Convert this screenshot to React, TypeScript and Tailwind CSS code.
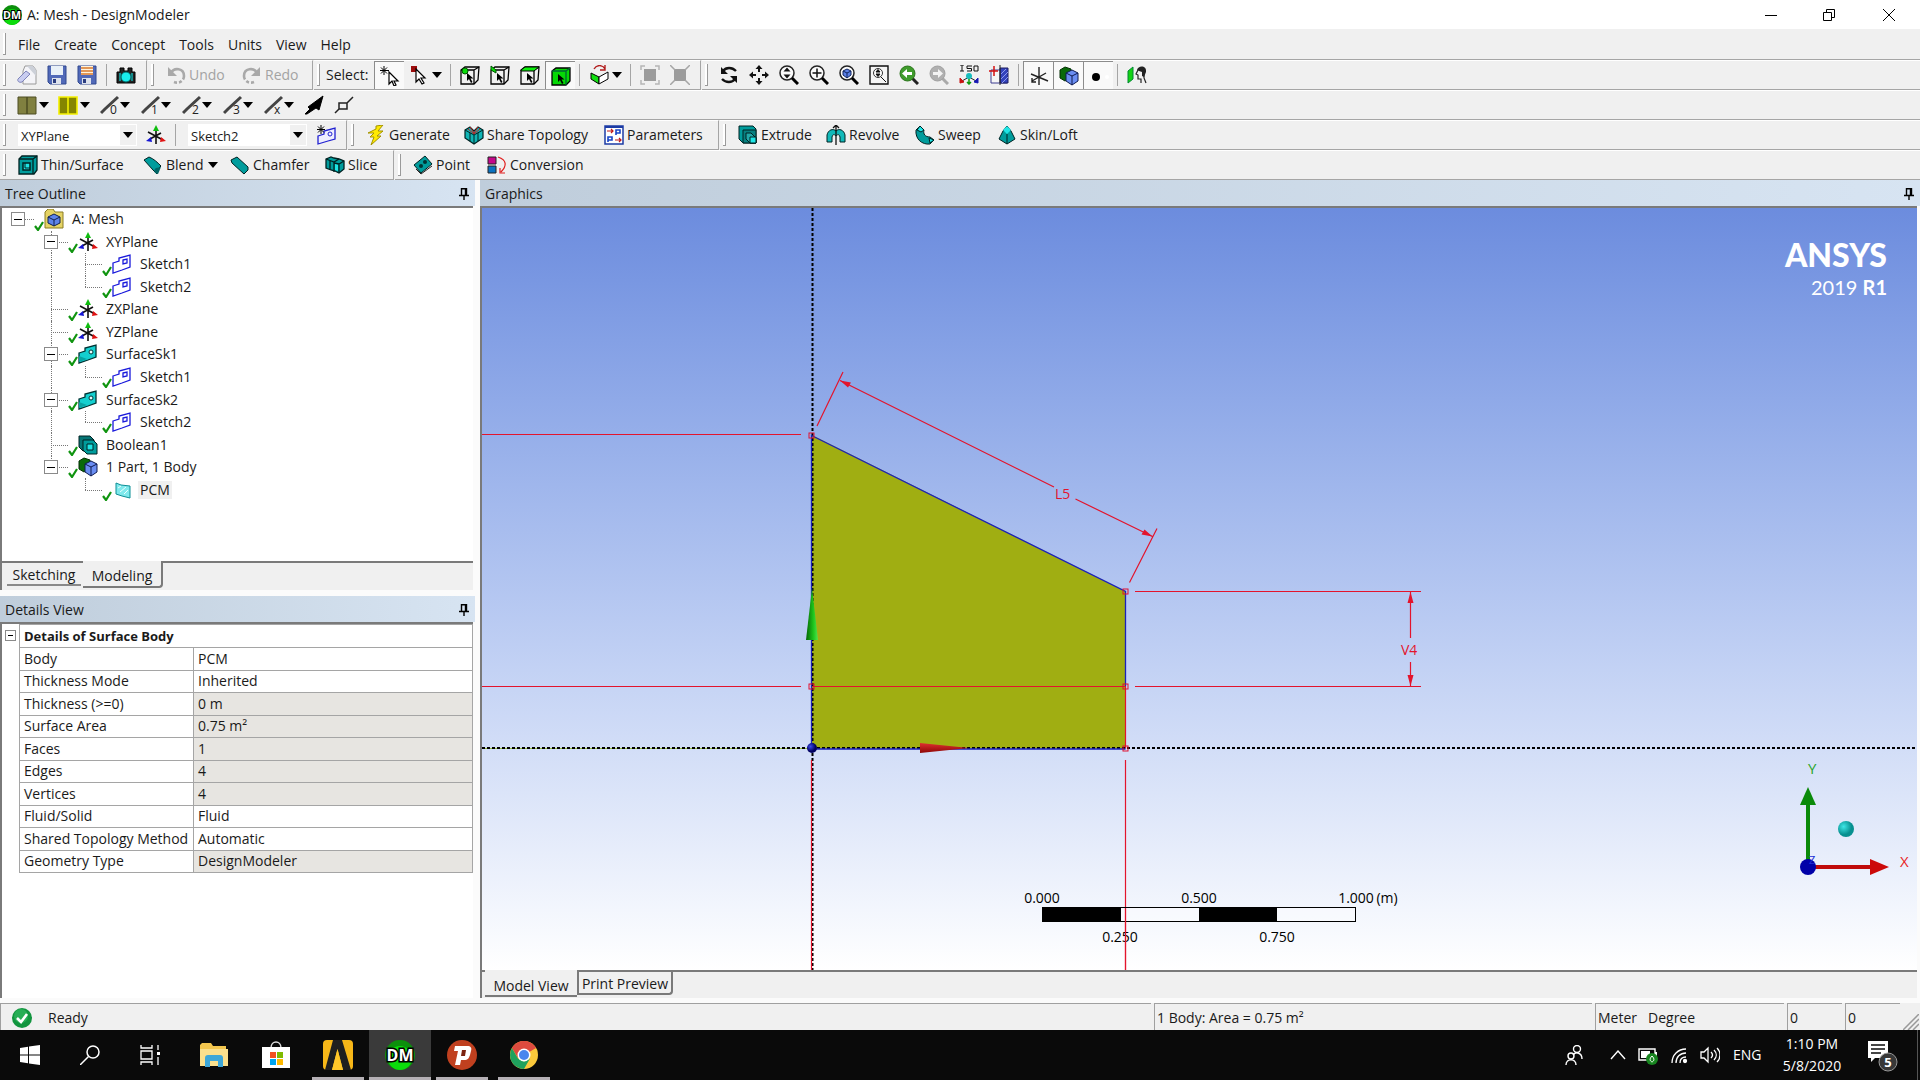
import React from 'react'

type IconName = keyof typeof icons

const teal = '#009c9c'
const cyan = '#1fe5e5'

const cursor = (
  <path d="M9 6v12l3-3 2 5 2-1-2-4h4z" fill="#fff" stroke="#000" strokeWidth="1.2" />
)

const cubeOutline = (
  <>
    <path d="M1 5l4-3h14l-1 13-4 4H1z" fill="#f0f0f0" stroke="#000" strokeWidth="1.3" />
    <path d="M1 5h13v14M14 5l5-3" fill="none" stroke="#000" strokeWidth="1.3" />
  </>
)

const smallCursor = <path d="M7 8v8l2-2 2 4 1.5-1-2-3.500h3z" fill="#000" />

const lens = (
  <>
    <circle cx="8" cy="8" r="7" fill="#fafafa" stroke="#222" strokeWidth="1.5" />
    <path d="M13 13l6 6" stroke="#000" strokeWidth="3" />
  </>
)

const icons = {
  newFile: (
    <>
      <path d="M8 1h8l3 4v14H6V6z" fill="#f4f4f8" stroke="#999" />
      <path d="M10 1l9 10V5l-3-4z" fill="#ccd0d8" />
      <path d="M1 14l8-8 4 3-8 8c-3 1-5-1-4-3z" fill="#c9cdf0" stroke="#7d82b8" />
    </>
  ),
  save: (
    <>
      <path d="M1 1h18v18H3l-2-2z" fill="#5169b8" stroke="#30488f" />
      <path d="M4 1h12v9H4z" fill="#e9f0f7" />
      <path d="M5 13h9v6H5z" fill="#dde2ec" />
      <path d="M6 14h3v4H6z" fill="#2b3c80" />
    </>
  ),
  saveAs: (
    <>
      <path d="M1 1h18v18H3l-2-2z" fill="#5169b8" stroke="#30488f" />
      <path d="M4 1h12v9H4z" fill="#fff3dd" />
      <path d="M4 3h12M4 6h12M4 9h12" stroke="#d8792c" strokeWidth="1.300" />
      <path d="M5 13h9v6H5z" fill="#dde2ec" />
      <path d="M6 14h3v4H6z" fill="#2b3c80" />
    </>
  ),
  camera: (
    <>
      <path d="M1 7h3V3h4v3h4V3h4v4h3v11H1z" fill="#222" stroke="#000" />
      <path d="M3 8h2v8H3zM15 8h2v8h-2z" fill="#178c8c" />
      <circle cx="10" cy="12" r="5" fill="#19eded" stroke="#066" />
    </>
  ),
  undo: (
    <>
      <path d="M5 8c3-6 13-5 13 3 0 5-5 8-10 6" fill="none" stroke="#a9a9a9" strokeWidth="2.600" strokeDasharray="22 2 3 2" />
      <path d="M2 2v9h9z" fill="#a9a9a9" />
    </>
  ),
  redo: (
    <>
      <path d="M15 8C12 2 2 3 2 11c0 5 5 8 10 6" fill="none" stroke="#a9a9a9" strokeWidth="2.600" strokeDasharray="22 2 3 2" />
      <path d="M18 2v9H9z" fill="#a9a9a9" />
    </>
  ),
  newSelect: (
    <>
      <path d="M4 0v9M0 4.500h9M1 1.500l6 6M7 1.500l-6 6" stroke="#000" />
      {cursor}
    </>
  ),
  boxSelect: (
    <>
      <path d="M1 1h6v6H1z" fill="#9b0c0c" />
      <path d="M6 4v13l3-3 3 5 2-1-3-5h4z" fill="#fff" stroke="#000" strokeWidth="1.200" />
    </>
  ),
  selPoint: (
    <>
      {cubeOutline}
      <circle cx="5" cy="6" r="3" fill="#0bdc0b" stroke="#050" />
      {smallCursor}
    </>
  ),
  selEdge: (
    <>
      {cubeOutline}
      <path d="M1 1l5 4v3L1 5z" fill="#0bdc0b" stroke="#050" />
      {smallCursor}
    </>
  ),
  selFace: (
    <>
      {cubeOutline}
      <path d="M1 5l4-3h14l-5 4H1z" fill="#0bee0b" stroke="#000" />
      {smallCursor}
    </>
  ),
  selBody: (
    <>
      <path d="M1 5l4-3h14v13l-4 4H1z" fill="#05d805" stroke="#000" strokeWidth="1.300" />
      <path d="M1 5h14v14M15 5l4-3" fill="none" stroke="#063" strokeWidth="1.300" />
      {smallCursor}
    </>
  ),
  extend: (
    <>
      <path d="M1 8l8 4v7l-8-5z" fill="#12e012" stroke="#000" />
      <path d="M9 12l9-5v7l-9 5z" fill="#fff" stroke="#000" />
      <path d="M4 4c3-5 9-4 11 0M15 0v5h-5" fill="none" stroke="#b21c1c" strokeWidth="1.400" />
    </>
  ),
  expand: (
    <>
      <path d="M4 4h12v12H4z" fill="#9c9c9c" />
      <path d="M1 5V1h4M15 1h4v4M19 15v4h-4M5 19H1v-4" fill="none" stroke="#b5b5b5" strokeWidth="1.500" />
    </>
  ),
  shrink: (
    <>
      <path d="M4 4h12v12H4z" fill="#9c9c9c" />
      <path d="M0 0l5 5M20 0l-5 5M0 20l5-5M20 20l-5-5" stroke="#a5a5a5" strokeWidth="1.500" />
    </>
  ),
  rotate: (
    <>
      <path d="M4 6c3-4 9-4 13 0M16 14c-3 4-9 4-13 0" fill="none" stroke="#111" strokeWidth="2.400" />
      <path d="M2 2v7h7zM18 18v-7h-7z" fill="#111" />
    </>
  ),
  pan: (
    <path d="M10 0l3.500 4h-2.500v3H9V4H6.500zM10 20l3.500-4h-2.500v-3H9v3H6.500zM0 10l4-3.500V9h3v2H4v2.500zM20 10l-4-3.500V9h-3v2h3v2.500z" fill="#111" />
  ),
  zoom: (
    <>
      {lens}
      <path d="M8 2.500l3.500 4h-7zM8 13.500l3.500-4h-7z" fill="#111" />
    </>
  ),
  zoomBox: (
    <>
      {lens}
      <path d="M8 3.500v9M3.500 8h9" stroke="#111" strokeWidth="1.500" />
    </>
  ),
  zoomFit: (
    <>
      {lens}
      <path d="M4 6l4-2 4 2v4l-4 3-4-3z" fill="#5b80e8" stroke="#10255f" />
      <path d="M4 6l4 2 4-2M8 8v5" fill="none" stroke="#10255f" />
    </>
  ),
  magnifier: (
    <>
      <path d="M1 1h18v18H1z" fill="#f6f6f6" stroke="#111" strokeWidth="1.400" />
      <circle cx="9" cy="8" r="4.500" fill="#fff" stroke="#333" />
      <path d="M9 4.500l2 2.500H7zM9 11.500L11 9H7zM12 12l5 5" fill="#111" stroke="#111" />
    </>
  ),
  prevView: (
    <>
      <path d="M13 13l6 6" stroke="#222" strokeWidth="3" />
      <circle cx="8.500" cy="8.500" r="7.500" fill="#3f9c2c" stroke="#2b741c" />
      <path d="M3 8.500l5-4.500v3h5v3H8v3z" fill="#fff" />
    </>
  ),
  nextView: (
    <>
      <path d="M13 13l6 6" stroke="#aaa" strokeWidth="3" />
      <circle cx="8.500" cy="8.500" r="7.500" fill="#b0b0b0" stroke="#a0a0a0" />
      <path d="M14 8.500L9 4v3H4v3h5v3z" fill="#f3f3f3" />
    </>
  ),
  iso: (
    <>
      <path d="M1 0h4M3 0v6M1 6h4M13 1H8v2.500h4.500V6H8M15 1h4v5h-4z" fill="none" stroke="#111" />
      <path d="M10 11v8M8 17l2 2 2-2" fill="none" stroke="#0a980a" strokeWidth="1.500" />
      <path d="M10 12l-7 4" stroke="#222" />
      <path d="M1 18v-5l4 4z" fill="#c81212" stroke="#c81212" />
      <path d="M10 12l7 4" stroke="#222" />
      <path d="M19 18v-5l-4 4z" fill="#1818b4" stroke="#1818b4" />
      <circle cx="10" cy="11" r="3" fill="#17bdbd" />
    </>
  ),
  lookAt: (
    <>
      <path d="M2 5h16v13H2z" fill="#f6f6f6" stroke="#3d3d90" />
      <path d="M11 3h8v15h-8z" fill="#3342bc" stroke="#1f1f60" />
      <path d="M12 9l5-5M12 14l7-7M13 18l6-6" stroke="#8d9bee" />
      <path d="M5 1v10M0 6h9" stroke="#d41111" strokeWidth="1.500" />
      <path d="M11 0v20" stroke="#222" />
    </>
  ),
  axes: <path d="M10 1v18M2 8l17 7M17 7L3 15M3 12v4h4" fill="none" stroke="#222" strokeWidth="1.400" />,
  bodies: (
    <>
      <path d="M1 4l5-3 6 2v9l-6 3-5-3z" fill="#0a6a0a" stroke="#032f03" />
      <path d="M7 7l6-3 6 3v8l-6 4-6-4z" fill="#6a8df2" stroke="#0e1b50" />
      <path d="M7 7l6 3 6-3M13 10v9" fill="none" stroke="#0e1b50" />
    </>
  ),
  point: (
    <>
      <circle cx="7" cy="11" r="4" fill="#000" />
      <circle cx="18" cy="11" r="2" fill="#fff" />
    </>
  ),
  face: (
    <>
      <path d="M1 6l5-4v12l-5 4z" fill="#14d314" stroke="#083" />
      <path d="M11 5l-2 4 2 1v4h3v4M17 9v4l2 5" fill="none" stroke="#222" strokeWidth="1.200" />
      <path d="M10 5c1-5 10-5 9 2l-2 5-2-1V7l-3-1z" fill="#222" />
    </>
  ),
  faceColor: (
    <>
      <path d="M1 2h18v17H1z" fill="#808040" stroke="#4c4c22" />
      <path d="M10 2v17" stroke="#4c4c22" strokeWidth="1.500" />
    </>
  ),
  edgeColor: (
    <>
      <path d="M1 2h18v17H1z" fill="#858500" stroke="#f4f000" strokeWidth="1.600" />
      <path d="M10 2v17" stroke="#f4f000" strokeWidth="1.600" />
    </>
  ),
  arrowEdge: <path d="M1 19l5-5-2-2L19 1l-4 14-3-2-9 6z" fill="#000" stroke="#000" />,
  vertexEdge: <path d="M5 8h8v6H5zM1 18l4-4M13 8l6-6" fill="none" stroke="#222" strokeWidth="1.500" />,
  triad: (
    <>
      <path d="M10 4v15M2 7l15 8M15 8L4 14" stroke="#111" strokeWidth="1.600" />
      <path d="M7 6l3-6 3 6z" fill="#0fbd0f" />
      <path d="M20 16l-6 1 1-5z" fill="#e01212" />
      <path d="M0 16l6 1-1-5z" fill="#1515d4" />
    </>
  ),
  newSketch: (
    <>
      <path d="M2 11l6-2V6l11-3v11l-7 2-10 3z" fill="#eef" stroke="#2020d0" strokeWidth="1.300" />
      <circle cx="14" cy="9" r="2" fill="none" stroke="#2020d0" />
      <path d="M5 0v9M1 4.500h8M2 1.500l6 6M8 1.500l-6 6" stroke="#000" />
    </>
  ),
  sketch: (
    <>
      <path d="M1 9l6-2V4l11-3v12l-8 3-9 3z" fill="#fff" stroke="#1a1adb" strokeWidth="1.300" />
      <path d="M11 6l4-1v4l-4 1z" fill="none" stroke="#1a1adb" strokeWidth="1.300" />
    </>
  ),
  surface: (
    <>
      <path d="M1 9l6-2V4l11-3v12l-8 3-9 3z" fill="#14cfcf" stroke="#033" strokeWidth="1.300" />
      <path d="M1 12v6l8-3z" fill="#08a3a3" />
      <circle cx="13" cy="8" r="2" fill="#e5ffff" stroke="#033" />
    </>
  ),
  generate: (
    <path d="M10 1l7-1-5 6h5l-6 5h4L5 20l3-8H4l4-4H2l8-4z" fill="#ffea00" stroke="#a39300" />
  ),
  shareTopology: (
    <>
      <path d="M1 5l5-3 4 4 4-4 5 3v8l-9 6-9-6z" fill="#10b5b5" stroke="#022" strokeWidth="1.200" />
      <path d="M1 5l9 5 9-5M10 10v9M6 8v8M14 8v8" fill="none" stroke="#022" />
      <path d="M6 2l4 6 4-6M4 4l6 5 6-5" fill="none" stroke="#c32020" />
    </>
  ),
  parameters: (
    <>
      <path d="M1 1h18v18H1z" fill="#fff" stroke="#1c3ba5" strokeWidth="1.500" />
      <path d="M1 2h18" stroke="#1c3ba5" strokeWidth="2" />
      <path d="M12 10V5h4v3h-4M4 17v-5h4v3H4" fill="none" stroke="#1744c7" strokeWidth="1.600" />
      <path d="M3 6h6M7 4l2 2-2 2M11 15h6M15 13l2 2-2 2" fill="none" stroke="#c01818" strokeWidth="1.200" />
    </>
  ),
  extrude: (
    <>
      <path d="M1 1h14l3 3v14H5l-4-4z" fill={teal} stroke="#022" />
      <path d="M5 5h13v13H5z" fill="#078080" stroke="#022" />
      <path d="M8 8h5l5 5v5h-6l-4-4z" fill="#22a9a9" stroke="#022" />
      <path d="M12 12h6v6h-6z" fill={cyan} stroke="#022" />
    </>
  ),
  revolve: (
    <>
      <path d="M1 17v-7c1-5 6-7 9-4 3-3 8-1 9 4v7h-5v-5c-1-3-2-3-4-1-2-2-3-2-4 1v5z" fill="#12b9b9" stroke="#022" />
      <path d="M10 0v20M7 3l3-3 3 3" fill="none" stroke="#111" strokeWidth="1.300" />
    </>
  ),
  sweep: (
    <>
      <path d="M1 5l4-4 4 4c-1 4 1 7 6 7l4 3-4 4C7 20 0 14 1 5z" fill={teal} stroke="#022" />
      <path d="M2 5l3-4 4 4-3 2z" fill={cyan} stroke="#022" />
      <path d="M14 13l5 2-4 3z" fill={cyan} stroke="#022" />
    </>
  ),
  skin: (
    <>
      <path d="M10 1l4 5 4 8-8 5-8-5 4-8z" fill={teal} stroke="#022" />
      <path d="M10 1l4 4-4 4-4-4z" fill={cyan} />
      <path d="M10 9v10" stroke="#022" />
    </>
  ),
  thin: (
    <>
      <path d="M1 4l3-3h15v14l-3 4H1z" fill={teal} stroke="#022" strokeWidth="1.300" />
      <path d="M1 4h14v15M15 4l4-3" fill="none" stroke="#022" strokeWidth="1.300" />
      <path d="M5 8h7v7H5z" fill={cyan} stroke="#022" strokeWidth="1.500" />
      <path d="M7 8v5h5" fill="none" stroke="#022" />
    </>
  ),
  blend: (
    <>
      <path d="M1 5l5-3c5 2 8 5 12 9l-3 3-1 5-4-4z" fill={teal} stroke="#022" />
      <path d="M13 13c-2 1-2 3-1 5l3 1 3-7z" fill="#066" />
    </>
  ),
  chamfer: <path d="M1 5l6-3 11 10v3l-4 4L2 8z" fill={teal} stroke="#022" />,
  slice: (
    <>
      <path d="M1 4l5-2 3 1 5 1 5 2v8l-5 4-4-2-4-1-5-2z" fill={teal} stroke="#022" strokeWidth="1.300" />
      <path d="M9 8l5 1 5-3M14 9v9M5 6v9M9 7v10M1 4l8 3 5-3" fill="none" stroke="#022" strokeWidth="1.300" />
      <path d="M10 9l3 1v6l-3-1z" fill={cyan} />
    </>
  ),
  pointTool: (
    <>
      <path d="M1 10L12 1l7 8-11 9z" fill={teal} stroke="#022" />
      <path d="M3 14l5 5 11-8" fill="none" stroke="#222" />
      <circle cx="12" cy="7" r="2" fill="#033" />
      <circle cx="8" cy="11" r="2" fill="#033" />
    </>
  ),
  conversion: (
    <>
      <path d="M1 2h8v7H1z" fill="#c5088b" stroke="#222" />
      <path d="M1 11h8v7H1z" fill="#0a72c0" stroke="#222" />
      <path d="M11 2c9 3 9 9 3 15M13 13v5h5" fill="none" stroke="#e01f1f" strokeWidth="1.200" />
    </>
  ),
  project: (
    <>
      <path d="M1 3l3-3h5l2 3h8v16H1z" fill="#e5d365" stroke="#8b7d22" />
      <path d="M4 8l6-3 6 3v6l-6 3-6-3z" fill="#5d83ea" stroke="#10204f" />
      <path d="M4 8l6 3 6-3M10 11v6" fill="none" stroke="#10204f" />
    </>
  ),
  boolean: (
    <>
      <path d="M1 1h11l4 4v11H5l-4-4z" fill="#067575" stroke="#022" />
      <path d="M5 5h10l4 4v10H9l-4-4z" fill={teal} stroke="#022" />
      <path d="M9 9h6v6H9z" fill={cyan} stroke="#022" />
    </>
  ),
  sheet: (
    <>
      <path d="M4 3l5 2 9 1v12l-8-2-6-2z" fill="#7fe9ec" stroke="#0d8f96" />
      <path d="M6 8l3-2M8 12l6-5M12 14l4-4" stroke="#e9ffff" />
    </>
  ),
}

function Icon({ name }: { name: IconName }) {
  return (
    <svg viewBox="0 0 20 20" className="h-5 w-5 shrink-0" aria-hidden="true">
      {icons[name]}
    </svg>
  )
}

function Caret() {
  return (
    <svg viewBox="0 0 10 6" className="h-[6px] w-[10px] shrink-0" aria-hidden="true">
      <path d="M0 0h10L5 6z" fill="#000" />
    </svg>
  )
}

function Section({ children, last }: { children: React.ReactNode; last?: boolean }) {
  return (
    <div
      className={`flex items-center border-b border-[#a5a5a5] border-t border-t-white pr-[5px] ${
        last ? 'flex-1' : 'border-r mr-px'
      }`}
    >
      <span className="ml-[3px] mr-[6px] h-[22px] w-[3px] border-r border-b border-[#9a9a9a] bg-white" />
      {children}
    </div>
  )
}

function Sep() {
  return <span className="mx-1 h-[22px] w-px bg-[#a5a5a5]" />
}

function IconButton({ name, label, pressed }: { name: IconName; label: string; pressed?: boolean }) {
  return (
    <button
      type="button"
      aria-label={label}
      aria-pressed={pressed}
      className={`flex h-[28px] w-[30px] items-center justify-center ${
        pressed ? 'border-t border-l border-[#8c8c8c] bg-[#f9f9f9]' : ''
      }`}
    >
      <Icon name={name} />
    </button>
  )
}

function DropButton({ name, label }: { name: IconName; label: string }) {
  return (
    <button type="button" aria-label={label} className="flex h-[28px] w-[42px] items-center gap-[2px] pl-[6px]">
      <Icon name={name} />
      <Caret />
    </button>
  )
}

function TextButton({ name, children, width, caret, disabled }: {
  name: IconName
  children: string
  width: string
  caret?: boolean
  disabled?: boolean
}) {
  return (
    <button
      type="button"
      disabled={disabled}
      className={`flex h-[28px] items-center gap-[3px] pl-[6px] whitespace-nowrap ${width} ${
        disabled ? 'text-[#a3a3a3]' : ''
      }`}
    >
      <Icon name={name} />
      {children}
      {caret && <span className="ml-px"><Caret /></span>}
    </button>
  )
}

function EdgeButton({ digit }: { digit: string }) {
  return (
    <button type="button" aria-label={`Edge coloring ${digit}`} className="flex h-[28px] w-[41px] items-center pl-[6px]">
      <svg viewBox="0 0 20 26" className="h-[26px] w-5" aria-hidden="true">
        <path d="M1 21l4-4L18 5" stroke="#444" strokeWidth="3" fill="none" />
        <text x="10" y="22" fontSize="12" fill="#222">{digit}</text>
      </svg>
      <Caret />
    </button>
  )
}

function Picker({ id, label, value }: { id: string; label: string; value: string }) {
  return (
    <div className="relative h-[22px] w-[119px] bg-white">
      <label htmlFor={id} className="sr-only">{label}</label>
      <select id={id} defaultValue={value} className="h-full w-full appearance-none bg-transparent pt-px pl-[3px] text-[13px] outline-none">
        <option>{value}</option>
      </select>
      <span className="pointer-events-none absolute inset-y-px right-px flex w-4 items-center justify-center bg-[#f0f0f0]">
        <Caret />
      </span>
    </div>
  )
}

const menus = ['File', 'Create', 'Concept', 'Tools', 'Units', 'View', 'Help']

function Toolbars() {
  return (
    <div className="bg-[#f0f0f0]">
      <nav className="flex h-[31px] items-center border-b border-[#a5a5a5]">
        <span className="ml-[3px] mr-3 h-[22px] w-[3px] border-r border-b border-[#9a9a9a] bg-white" />
        <div className="flex gap-[14px] pt-[2px]">
          {menus.map((m) => <button key={m} type="button">{m}</button>)}
        </div>
      </nav>

      <div className="flex h-[30px]">
        <Section>
          <IconButton name="newFile" label="New" />
          <IconButton name="save" label="Save" />
          <IconButton name="saveAs" label="Save as" />
          <Sep />
          <IconButton name="camera" label="Image capture" />
        </Section>
        <Section>
          <TextButton name="undo" width="w-[76px]" disabled>Undo</TextButton>
          <TextButton name="redo" width="w-[71px]" disabled>Redo</TextButton>
        </Section>
        <Section>
          <span className="w-[48px]">Select:</span>
          <IconButton name="newSelect" label="New selection" pressed />
          <DropButton name="boxSelect" label="Select mode" />
          <Sep />
          <IconButton name="selPoint" label="Points" />
          <IconButton name="selEdge" label="Edges" />
          <IconButton name="selFace" label="Faces" />
          <IconButton name="selBody" label="Bodies" pressed />
          <Sep />
          <DropButton name="extend" label="Extend selection" />
          <Sep />
          <IconButton name="expand" label="Expand" />
          <IconButton name="shrink" label="Shrink" />
        </Section>
        <Section last>
          <IconButton name="rotate" label="Rotate" />
          <IconButton name="pan" label="Pan" />
          <IconButton name="zoom" label="Zoom" />
          <IconButton name="zoomBox" label="Box zoom" />
          <IconButton name="zoomFit" label="Zoom to fit" />
          <IconButton name="magnifier" label="Magnifier" />
          <IconButton name="prevView" label="Previous view" />
          <IconButton name="nextView" label="Next view" />
          <IconButton name="iso" label="ISO view" />
          <IconButton name="lookAt" label="Look at" />
          <Sep />
          <IconButton name="axes" label="Display plane" pressed />
          <IconButton name="bodies" label="Display model" pressed />
          <IconButton name="point" label="Display points" pressed />
          <Sep />
          <IconButton name="face" label="Look at face" />
        </Section>
      </div>

      <div className="flex h-[30px]">
        <Section last>
          <button type="button" aria-label="Face color" className="flex h-[28px] w-[41px] items-center gap-[2px] pl-[5px]">
            <Icon name="faceColor" />
            <Caret />
          </button>
          <button type="button" aria-label="Edge color" className="flex h-[28px] w-[41px] items-center gap-[2px] pl-[5px]">
            <Icon name="edgeColor" />
            <Caret />
          </button>
          {['0', '1', '2', '3', 'x'].map((d) => <EdgeButton key={d} digit={d} />)}
          <IconButton name="arrowEdge" label="Edge direction" />
          <IconButton name="vertexEdge" label="Display vertices" />
        </Section>
      </div>

      <div className="flex h-[30px]">
        <Section>
          <span className="w-[6px]" />
          <Picker id="plane" label="Plane" value="XYPlane" />
          <span className="w-1" />
          <IconButton name="triad" label="New plane" />
          <Sep />
          <span className="w-2" />
          <Picker id="sketch" label="Sketch" value="Sketch2" />
          <span className="w-1" />
          <IconButton name="newSketch" label="New sketch" />
        </Section>
        <Section>
          <TextButton name="generate" width="w-[98px]">Generate</TextButton>
          <TextButton name="shareTopology" width="w-[140px]">Share Topology</TextButton>
          <TextButton name="parameters" width="w-[115px]">Parameters</TextButton>
        </Section>
        <Section last>
          <TextButton name="extrude" width="w-[88px]">Extrude</TextButton>
          <TextButton name="revolve" width="w-[89px]">Revolve</TextButton>
          <TextButton name="sweep" width="w-[82px]">Sweep</TextButton>
          <TextButton name="skin" width="w-[100px]">Skin/Loft</TextButton>
        </Section>
      </div>

      <div className="flex h-[30px]">
        <Section>
          <TextButton name="thin" width="w-[125px]">Thin/Surface</TextButton>
          <TextButton name="blend" width="w-[87px]" caret>Blend</TextButton>
          <TextButton name="chamfer" width="w-[95px]">Chamfer</TextButton>
          <TextButton name="slice" width="w-[69px]">Slice</TextButton>
        </Section>
        <Section last>
          <TextButton name="pointTool" width="w-[74px]">Point</TextButton>
          <TextButton name="conversion" width="w-[110px]">Conversion</TextButton>
        </Section>
      </div>
    </div>
  )
}

function PanelHeader({ title }: { title: string }) {
  return (
    <div className="flex h-[26px] shrink-0 items-center justify-between bg-linear-to-r from-[#bfcddb] to-[#d7e4f2] pt-[2px] pr-[6px] pl-[5px]">
      <h2>{title}</h2>
      <button type="button" aria-label={`Pin ${title}`}>
        <svg viewBox="0 0 10 12" className="h-3 w-[10px]" aria-hidden="true">
          <path d="M2.500 0v7M2 .7h5.500M6.500 0v7M7.500 0v7M0 7.500h10M5 7v5" stroke="#000" strokeWidth="1.400" fill="none" />
        </svg>
      </button>
    </div>
  )
}

type TreeRow = {
  label: string
  icon: IconName
  depth: number
  open?: boolean
  // vertical guide lines, one entry per indent level below the root
  guides: ('full' | 'half' | 'none')[]
  selected?: boolean
}

const tree: TreeRow[] = [
  { label: 'A: Mesh', icon: 'project', depth: 0, open: true, guides: [] },
  { label: 'XYPlane', icon: 'triad', depth: 1, open: true, guides: ['full'] },
  { label: 'Sketch1', icon: 'sketch', depth: 2, guides: ['full', 'full'] },
  { label: 'Sketch2', icon: 'sketch', depth: 2, guides: ['full', 'half'] },
  { label: 'ZXPlane', icon: 'triad', depth: 1, guides: ['full'] },
  { label: 'YZPlane', icon: 'triad', depth: 1, guides: ['full'] },
  { label: 'SurfaceSk1', icon: 'surface', depth: 1, open: true, guides: ['full'] },
  { label: 'Sketch1', icon: 'sketch', depth: 2, guides: ['full', 'half'] },
  { label: 'SurfaceSk2', icon: 'surface', depth: 1, open: true, guides: ['full'] },
  { label: 'Sketch2', icon: 'sketch', depth: 2, guides: ['full', 'half'] },
  { label: 'Boolean1', icon: 'boolean', depth: 1, guides: ['full'] },
  { label: '1 Part, 1 Body', icon: 'bodies', depth: 1, open: true, guides: ['half'] },
  { label: 'PCM', icon: 'sheet', depth: 2, guides: ['none', 'half'], selected: true },
]

function Minus() {
  return (
    <button type="button" aria-label="Collapse" className="relative flex h-[14px] w-[14px] items-center justify-center border border-[#8a8a8a] bg-white">
      <span className="h-px w-2 bg-black" />
    </button>
  )
}

function TreeItem({ row }: { row: TreeRow }) {
  return (
    <li className="flex items-center">
      {[0, 1, 2].slice(0, row.depth + 1).map((level) => {
        const guide = level === 0 ? 'none' : row.guides[level - 1]
        return (
          <span key={level} className={`relative flex h-full items-center justify-center ${level === 0 ? 'w-[32px]' : 'w-[34px]'}`}>
            {guide === 'full' && <span className="absolute inset-y-0 left-[17px] border-l border-dotted border-[#777]" />}
            {guide === 'half' && <span className="absolute top-0 bottom-1/2 left-[17px] border-l border-dotted border-[#777]" />}
            {level === row.depth && <span className="absolute left-[17px] right-0 top-1/2 border-t border-dotted border-[#777]" />}
            {level === row.depth && row.open && <Minus />}
          </span>
        )
      })}
      <svg viewBox="0 0 10 10" className="h-[10px] w-[10px] self-end" aria-hidden="true">
        <path d="M1 5l3 4 5-8" stroke="#109410" strokeWidth="2.200" fill="none" />
      </svg>
      <Icon name={row.icon} />
      <span className={`ml-[6px] px-[2px] ${row.selected ? 'bg-[#f0f0f0]' : ''}`}>{row.label}</span>
    </li>
  )
}

const details: { name: string; value: React.ReactNode; locked?: boolean }[] = [
  { name: 'Body', value: 'PCM' },
  { name: 'Thickness Mode', value: 'Inherited' },
  { name: 'Thickness (>=0)', value: '0 m', locked: true },
  { name: 'Surface Area', value: '0.75 m²', locked: true },
  { name: 'Faces', value: '1', locked: true },
  { name: 'Edges', value: '4', locked: true },
  { name: 'Vertices', value: '4', locked: true },
  { name: 'Fluid/Solid', value: 'Fluid' },
  { name: 'Shared Topology Method', value: 'Automatic' },
  { name: 'Geometry Type', value: 'DesignModeler', locked: true },
]

function LeftPane() {
  return (
    <aside className="flex w-[475px] shrink-0 flex-col">
      <PanelHeader title="Tree Outline" />
      <div className="mr-[2px] flex h-[384px] shrink-0 flex-col border-t-2 border-l-2 border-[#7a7a7a] bg-[#f0f0f0]">
        <div className="h-[355px] shrink-0 border-b-2 border-[#7a7a7a] bg-white">
          <ul className="grid h-[293px] auto-rows-fr">
            {tree.map((row, i) => <TreeItem key={i} row={row} />)}
          </ul>
        </div>
        <div className="flex items-start pl-[5px]">
          <button type="button" className="h-[23px] w-[74px] border-b-2 border-[#8a8a8a] pt-[2px]">Sketching</button>
          <button type="button" className="-mt-[2px] ml-[2px] h-[27px] w-[80px] rounded-br-sm border-r-2 border-b-2 border-[#7a7a7a] bg-[#f0f0f0] pt-1">Modeling</button>
        </div>
      </div>
      <div className="h-[6px] shrink-0" />
      <PanelHeader title="Details View" />
      <div className="mr-[2px] flex-1 border-t-2 border-l-2 border-[#7a7a7a] bg-white">
        <div className="flex items-start">
          <div className="flex h-[23px] w-[17px] items-center justify-center">
            <button type="button" aria-label="Collapse details" className="flex h-[11px] w-[11px] items-center justify-center border border-[#8a8a8a]">
              <span className="h-px w-[5px] bg-black" />
            </button>
          </div>
          <table className="h-[249px] flex-1 table-fixed border-collapse text-left leading-4">
            <thead>
              <tr>
                <th colSpan={2} className="h-[23px] border border-[#a5a5a5] px-1 text-[13px] font-bold">Details of Surface Body</th>
              </tr>
            </thead>
            <tbody>
              {details.map((d) => (
                <tr key={d.name}>
                  <th className="w-[174px] border border-[#a5a5a5] px-1 font-normal whitespace-nowrap">{d.name}</th>
                  <td className={`border border-[#a5a5a5] px-1 ${d.locked ? 'bg-[#e7e5e1]' : ''}`}>{d.value}</td>
                </tr>
              ))}
            </tbody>
          </table>
        </div>
      </div>
    </aside>
  )
}

function Handle({ x, y }: { x: number; y: number }) {
  return <rect x={x - 2} y={y - 2} width="5" height="5" fill="none" stroke="#e01030" />
}

function Model() {
  return (
    <svg className="absolute inset-0 h-full w-full" fontFamily='"Open Sans", sans-serif'>
      <defs>
        <radialGradient id="blue" cx="35%" cy="35%">
          <stop offset="0" stopColor="#3a4ae8" />
          <stop offset="1" stopColor="#00005f" />
        </radialGradient>
        <linearGradient id="green">
          <stop offset="0" stopColor="#056605" />
          <stop offset=".6" stopColor="#1cc41c" />
          <stop offset="1" stopColor="#4fe44f" />
        </linearGradient>
        <linearGradient id="red" x2="0" y2="1">
          <stop offset="0" stopColor="#e03030" />
          <stop offset="1" stopColor="#8c0606" />
        </linearGradient>
      </defs>

      <path d="M330 227L643.500 383.500V540.500H330z" fill="#a0ae12" />

      <line x1="0" y1="540.500" x2="330" y2="540.500" stroke="#9bc23c" />
      <line x1="0" y1="540" x2="100%" y2="540" stroke="#000" strokeWidth="2" strokeDasharray="3 2" />
      <line x1="330.500" y1="0" x2="330.500" y2="100%" stroke="#000" strokeWidth="2" strokeDasharray="3 2" />

      <path d="M329.500 540.500V227.500L643.500 383.500V478M330 541H643.500" fill="none" stroke="#1b22b8" strokeWidth="1.300" />

      <g stroke="#e3142c" strokeWidth="1.200" fill="none">
        <path d="M0 226.500H319M0 478.500H319M330 478.500H643.500V540.500M653 383.500H939M653 478.500H939" />
        <path d="M928.500 384V430M928.500 454V478" />
        <path d="M335 218L361 164M358 172.500L572 279M593.500 291L670.500 328.500M647.500 374.500L675 320.500" />
        <line x1="329.500" y1="552" x2="329.500" y2="100%" />
        <line x1="643.500" y1="552" x2="643.500" y2="100%" />
      </g>
      <g fill="#e3142c">
        <path d="M928.500 384l3 11h-6zM928.500 478l3-11h-6zM358 172.500l11 2-3 5zM670.500 328.500l-11-2 3-5z" />
        <text x="573" y="291" fontSize="14">L5</text>
        <text x="919" y="447" fontSize="14">V4</text>
      </g>

      <path d="M330 380l6 52h-12z" fill="url(#green)" />
      <path d="M487 540l-49-5v10z" fill="url(#red)" />
      <Handle x={329} y={227} />
      <Handle x={329} y={478} />
      <Handle x={643} y={383} />
      <Handle x={643} y={478} />
      <Handle x={643} y={540} />
      <circle cx="330" cy="540" r="5" fill="url(#blue)" />

      <rect x="560.500" y="699.500" width="313" height="14" fill="#fff" fillOpacity=".4" stroke="#000" />
      <path d="M561 699h78v15h-78zM717 699h78v15h-78z" fill="#000" />
      <g fontSize="14" textAnchor="middle" fill="#000">
        <text x="560" y="695">0.000</text>
        <text x="717" y="695">0.500</text>
        <text x="874" y="695">1.000</text>
        <text x="905" y="695">(m)</text>
        <text x="638" y="734">0.250</text>
        <text x="795" y="734">0.750</text>
      </g>
      <line x1="643.500" y1="700" x2="643.500" y2="100%" stroke="#e3142c" strokeWidth="1.200" />
    </svg>
  )
}

function Triad() {
  return (
    <svg viewBox="0 0 120 125" className="absolute right-px bottom-[90px] h-[125px] w-[120px]" fontFamily='"Open Sans", sans-serif' fontSize="15">
      <defs>
        <radialGradient id="ball" cx="35%" cy="35%">
          <stop offset="0" stopColor="#3fe6e6" />
          <stop offset="1" stopColor="#079090" />
        </radialGradient>
      </defs>
      <text x="12" y="19" fill="#2aa52a">Y</text>
      <text x="104" y="112" fill="#e82424">X</text>
      <path d="M10 50h4v60h-4z" fill="#0a8a0a" />
      <path d="M12 32l8 18H4z" fill="#0a8a0a" />
      <path d="M12 110h62v4H12z" fill="#c00b0b" />
      <path d="M93 112l-19 8v-16z" fill="#cc0a0a" />
      <circle cx="12" cy="112" r="8" fill="#0000a8" />
      <text x="13" y="109" fontSize="11" fill="#2030d8">Z</text>
      <circle cx="50" cy="74" r="8" fill="url(#ball)" />
    </svg>
  )
}

function Graphics() {
  return (
    <section className="flex min-w-0 flex-1 flex-col">
      <PanelHeader title="Graphics" />
      <div className="mr-[3px] flex flex-1 flex-col border-t-2 border-l-2 border-[#7a7a7a] bg-[#f0f0f0]">
        <div className="relative flex-1 overflow-hidden bg-linear-to-b from-[#6c8cde] to-white">
          <Model />
          <Triad />
          <div className="absolute top-[27px] right-[30px] text-right font-['Lato',sans-serif] text-white">
            <div className="text-[32px] leading-10 font-black">ANSYS</div>
            <div className="text-[20px] leading-6">2019 <b className="font-bold">R1</b></div>
          </div>
        </div>
        <div className="flex h-7 items-start border-t-2 border-[#7a7a7a] pl-[3px]">
          <button type="button" className="-mt-[2px] h-[27px] w-[92px] border-b-2 border-[#7a7a7a] bg-[#f0f0f0] pt-[6px]">Model View</button>
          <button type="button" className="h-[23px] w-[96px] rounded-br-sm border-x-2 border-b-2 border-[#7a7a7a] pt-[2px]">Print Preview</button>
        </div>
      </div>
    </section>
  )
}

function StatusBar() {
  const cell = 'flex items-center border-t border-l border-[#a0a0a0] mr-[3px] pl-[2px] pt-px'
  return (
    <footer className="flex h-[27px] shrink-0 bg-[#f0f0f0]">
      <div className={`${cell} flex-1`}>
        <svg viewBox="0 0 20 20" className="ml-[9px] h-5 w-5" aria-hidden="true">
          <circle cx="10" cy="10" r="10" fill="#12953f" />
          <circle cx="9" cy="8" r="7" fill="#27ae55" />
          <path d="M5 10l4 4 6-8" stroke="#fff" strokeWidth="2.600" fill="none" />
        </svg>
        <span className="ml-4">Ready</span>
      </div>
      <div className={`${cell} w-[438px]`}>1 Body: Area = 0.75 m²</div>
      <div className={`${cell} w-[189px] gap-[11px]`}>
        <span>Meter</span>
        <span>Degree</span>
      </div>
      <div className={`${cell} w-[55px]`}>0</div>
      <div className={`${cell} w-[55px]`}>0</div>
      <svg viewBox="0 0 16 16" className="mr-px h-4 w-4 self-end" aria-hidden="true">
        <path d="M0 16L16 0M5 16L16 5M10 16l6-6" stroke="#999" strokeWidth="1.500" />
      </svg>
    </footer>
  )
}

function DmLogo({ className }: { className: string }) {
  return (
    <svg viewBox="0 0 30 30" className={className} aria-hidden="true">
      <circle cx="15" cy="15" r="15" fill="#0c8f0c" />
      <circle cx="15" cy="18" r="12" fill="#0bdc0b" />
      <text x="15" y="21" textAnchor="middle" fontSize="16" fontWeight="bold" fontFamily='"Open Sans", sans-serif' fill="#fff" stroke="#000" strokeWidth="3" paintOrder="stroke">DM</text>
    </svg>
  )
}

function TaskApp({ label, running, active, children }: {
  label: string
  running?: boolean
  active?: boolean
  children: React.ReactNode
}) {
  return (
    <button type="button" aria-label={label} className={`relative flex h-full w-[62px] items-center justify-center ${active ? 'bg-[#3a3a3a]' : ''}`}>
      {children}
      {running && <span className={`absolute bottom-0 h-[3px] bg-[#b5b0b5] ${active ? 'inset-x-0' : 'inset-x-[5px]'}`} />}
    </button>
  )
}

function Taskbar() {
  return (
    <div className="flex h-[50px] shrink-0 items-center bg-[#0a0a0a] text-white">
      <button type="button" aria-label="Start" className="flex w-[60px] justify-center">
        <svg viewBox="0 0 20 20" className="h-5 w-5" fill="#fff">
          <path d="M0 3l8-1.200v7.700H0zM9 1.600L20 0v9.500H9zM0 10.500h8v7.700L0 17zM9 10.500h11V20L9 18.400z" />
        </svg>
      </button>
      <button type="button" aria-label="Search" className="flex w-[60px] justify-center">
        <svg viewBox="0 0 20 20" className="h-5 w-5" fill="none" stroke="#fff" strokeWidth="1.500">
          <circle cx="13" cy="7" r="6" />
          <path d="M8.500 11.500L0 20" />
        </svg>
      </button>
      <button type="button" aria-label="Task view" className="mr-[3px] flex w-[60px] justify-center">
        <svg viewBox="0 0 20 20" className="h-5 w-5" fill="none" stroke="#fff" strokeWidth="1.300">
          <path d="M1 0v3h11V0M1 6h11v8H1zM1 20v-3h11v3M18 0v5M18 12v8" />
          <path d="M17 7h3v3h-3z" fill="#fff" stroke="none" />
        </svg>
      </button>
      <TaskApp label="File Explorer">
        <svg viewBox="0 0 28 24" className="h-6 w-7">
          <path d="M0 2l2-2h9l2 3h13v19H0z" fill="#f3c64e" />
          <path d="M0 6h28v17H0z" fill="#fbe08d" />
          <path d="M5 24V15c0-2 1-3 3-3h12c2 0 3 1 3 3v9h-5v-6h-8v6z" fill="#3ea7d8" />
        </svg>
      </TaskApp>
      <TaskApp label="Microsoft Store">
        <svg viewBox="0 0 30 30" className="h-[30px] w-[30px]">
          <path d="M10 8c0-8 10-8 10 0" fill="none" stroke="#ddd" strokeWidth="1.500" />
          <path d="M1 7h28v21H1z" fill="#fff" />
          <path d="M9 12h6v6H9z" fill="#f25022" />
          <path d="M16 12h6v6h-6z" fill="#7fba00" />
          <path d="M9 19h6v6H9z" fill="#00a4ef" />
          <path d="M16 19h6v6h-6z" fill="#ffb900" />
        </svg>
      </TaskApp>
      <TaskApp label="Workbench" running>
        <svg viewBox="0 0 30 30" className="h-[30px] w-[30px]">
          <rect width="30" height="30" rx="4" fill="#f7b718" />
          <path d="M10 0h9l9 30h-8L14.500 9 9 30H2z" fill="#1f1f1f" />
          <path d="M14.500 9L20 30H9z" fill="#ffc629" />
        </svg>
      </TaskApp>
      <TaskApp label="DesignModeler" running active>
        <DmLogo className="h-[30px] w-[30px]" />
      </TaskApp>
      <TaskApp label="PowerPoint viewer" running>
        <svg viewBox="0 0 30 30" className="h-[30px] w-[30px]">
          <circle cx="15" cy="15" r="15" fill="#c0401f" />
          <path d="M8 6h12c4 0 5 2 4 5l-1 4c-1 3-2 5-6 5h-3l-1 5H8l3-14H7z" fill="#fff" />
          <path d="M15 10h4l-1 6h-4z" fill="#7c2410" />
        </svg>
      </TaskApp>
      <TaskApp label="Chrome" running>
        <svg viewBox="0 0 28 28" className="h-7 w-7">
          <circle cx="14" cy="14" r="14" fill="#fbc93b" />
          <path d="M14 14L1.900 7A14 14 0 0 1 26.100 7z" fill="#dd4b3e" />
          <path d="M14 7h12.100A14 14 0 0 0 1.900 7L8 17z" fill="#dd4b3e" />
          <path d="M1.900 7A14 14 0 0 0 14 28l6-10.500-6 3-6-3z" fill="#1fa15d" />
          <circle cx="14" cy="14" r="6.500" fill="#fff" />
          <circle cx="14" cy="14" r="5" fill="#4a86ee" />
        </svg>
      </TaskApp>

      <div className="ml-auto flex h-full items-center">
        <svg viewBox="0 0 20 20" className="mr-[26px] h-5 w-5" fill="none" stroke="#fff" strokeWidth="1.400">
          <circle cx="13" cy="4" r="3.500" />
          <path d="M9 10c3-4 9-2 9 4" />
          <circle cx="7" cy="11" r="3" />
          <path d="M2 20c0-7 10-7 10 0" />
        </svg>
        <svg viewBox="0 0 16 10" className="mr-3 h-[10px] w-4" fill="none" stroke="#fff" strokeWidth="1.400">
          <path d="M1 9l7-8 7 8" />
        </svg>
        <svg viewBox="0 0 20 20" className="mr-3 h-5 w-5">
          <path d="M1 4h16v11H1z" fill="none" stroke="#fff" strokeWidth="1.400" />
          <path d="M3 6h9v7H3z" fill="#fff" />
          <path d="M17 7h2v4h-2z" fill="#fff" />
          <circle cx="14" cy="14" r="6" fill="#17851f" />
          <path d="M14 11c3 3 2 5 0 6-2-1-3-3 0-6z" fill="none" stroke="#fff" />
        </svg>
        <svg viewBox="0 0 18 18" className="mr-3 h-[18px] w-[18px]" fill="none" stroke="#fff" strokeWidth="1.300">
          <path d="M2 17C2 9 8 3 16 3M6 17c0-6 4-10 10-10M10 17c0-4 2-6 6-6" />
          <circle cx="15" cy="15" r="1.500" fill="#fff" />
        </svg>
        <svg viewBox="0 0 20 18" className="mr-[13px] h-[18px] w-5" fill="none" stroke="#fff" strokeWidth="1.300">
          <path d="M1 6h3l4-4v14l-4-4H1zM11 6c2 2 2 4 0 6M14 4c3 3 3 7 0 10M17 2c4 4 4 10 0 14" />
        </svg>
        <span className="w-[48px]">ENG</span>
        <div className="w-[62px] text-center leading-[22px] whitespace-nowrap">
          <div>1:10 PM</div>
          <div>5/8/2020</div>
        </div>
        <button type="button" aria-label="Notifications" className="relative ml-6 h-9 w-[50px]">
          <svg viewBox="0 0 32 36" className="h-9 w-8">
            <path d="M1 4h20v17H8l-4 4v-4H1z" fill="#fff" />
            <path d="M4 8h14M4 12h14M4 16h10" stroke="#0a0a0a" strokeWidth="1.500" />
            <circle cx="21" cy="25" r="9" fill="#383838" stroke="#999" />
            <text x="21" y="30" textAnchor="middle" fontSize="13" fontWeight="bold" fill="#fff">5</text>
          </svg>
        </button>
        <span className="mr-[2px] h-full w-px bg-[#555]" />
      </div>
    </div>
  )
}

export default function App() {
  return (
    <div className="flex h-screen flex-col overflow-hidden bg-[#fbfbfb] font-['Open_Sans',sans-serif] text-[14px] leading-[18px] text-[#1a1a1a]">
      <header className="flex h-[29px] shrink-0 items-center bg-white">
        <DmLogo className="ml-[2px] h-5 w-5" />
        <h1 className="ml-[5px]">A: Mesh - DesignModeler</h1>
        <div className="ml-auto flex">
          <button type="button" aria-label="Minimize" className="flex w-[58px] justify-center">
            <svg viewBox="0 0 12 12" className="h-3 w-3" stroke="#000"><path d="M0 6.500h12" /></svg>
          </button>
          <button type="button" aria-label="Restore" className="flex w-[58px] justify-center">
            <svg viewBox="0 0 12 12" className="h-3 w-3" fill="none" stroke="#000"><path d="M.5 3.500h8v8h-8zM3.500 3V.5h8v8H9" /></svg>
          </button>
          <button type="button" aria-label="Close" className="flex w-[62px] justify-center">
            <svg viewBox="0 0 12 12" className="h-3 w-3" stroke="#000"><path d="M0 0l12 12M12 0L0 12" /></svg>
          </button>
        </div>
      </header>
      <Toolbars />
      <main className="flex min-h-0 flex-1 gap-[5px] pb-[5px]">
        <LeftPane />
        <Graphics />
      </main>
      <StatusBar />
      <Taskbar />
    </div>
  )
}
